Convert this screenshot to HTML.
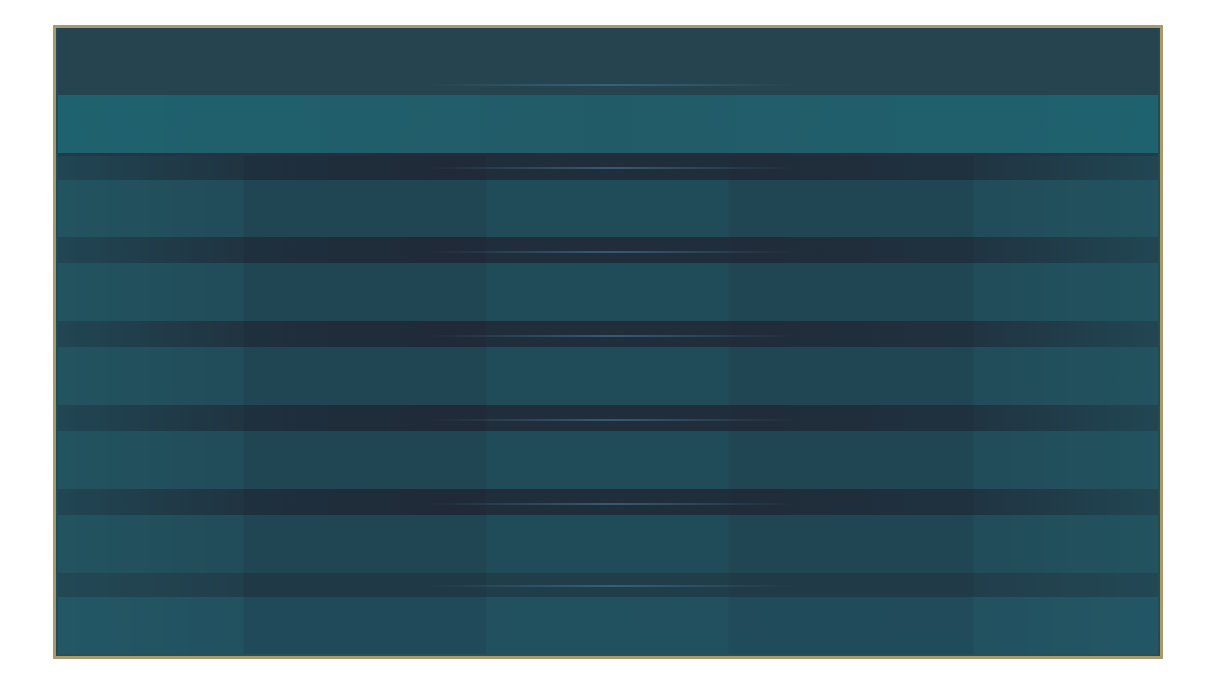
<!DOCTYPE html>
<html><head><style>
body{margin:0;width:1210px;height:691px;background:#fff;position:relative;overflow:hidden}
.frame{position:absolute;left:53px;top:25px;width:1104px;height:628px;border:3px solid #a89a6a;background:#214b57}
.r{position:absolute;left:2px;right:2px}
.ov{position:absolute;left:2px;right:2px;top:128px;bottom:2px;background:linear-gradient(90deg,rgba(40,110,120,.22) 0,rgba(40,110,120,.1) 90px,rgba(0,0,0,0) 185px,rgba(20,20,40,.12) 186px,rgba(20,20,40,.12) 428px,rgba(0,20,40,.02) 429px,rgba(0,20,40,.02) 670px,rgba(20,20,40,.1) 671px,rgba(20,20,40,.1) 915px,rgba(0,0,0,0) 916px,rgba(40,110,120,.2) 100%)}
.d{background:linear-gradient(90deg,#1f3a48,#212d3a 35%,#212f3c 65%,#203644 90%,#1f3c49)}
.l{background:#214c59}
.g{position:absolute;left:370px;width:370px;height:2px;background:linear-gradient(90deg,rgba(60,110,140,0),rgba(61,111,140,.7) 50%,rgba(60,110,140,0))}
</style></head><body>
<div class="frame">
<div class="r" style="top:0;height:67px;background:#26444f"></div>
<div class="r" style="top:67px;height:58px;background:linear-gradient(90deg,#1f626f,#225b68 50%,#1f626f)"></div>
<div class="r d" style="top:125px;height:27px"></div>
<div class="r l" style="top:152px;height:57px"></div>
<div class="r d" style="top:209px;height:26px"></div>
<div class="r l" style="top:235px;height:58px"></div>
<div class="r d" style="top:293px;height:26px"></div>
<div class="r l" style="top:319px;height:58px"></div>
<div class="r d" style="top:377px;height:26px"></div>
<div class="r l" style="top:403px;height:58px"></div>
<div class="r d" style="top:461px;height:26px"></div>
<div class="r l" style="top:487px;height:58px"></div>
<div class="r" style="top:545px;height:24px;background:#213e4b"></div>
<div class="r l" style="top:569px;bottom:0;background:#225160"></div>
<div class="ov"></div>
<div class="g" style="top:56px"></div>
<div class="g" style="top:139px"></div>
<div class="g" style="top:223px"></div>
<div class="g" style="top:307px"></div>
<div class="g" style="top:391px"></div>
<div class="g" style="top:475px"></div>
<div class="g" style="top:557px"></div>
</div>
</body></html>
